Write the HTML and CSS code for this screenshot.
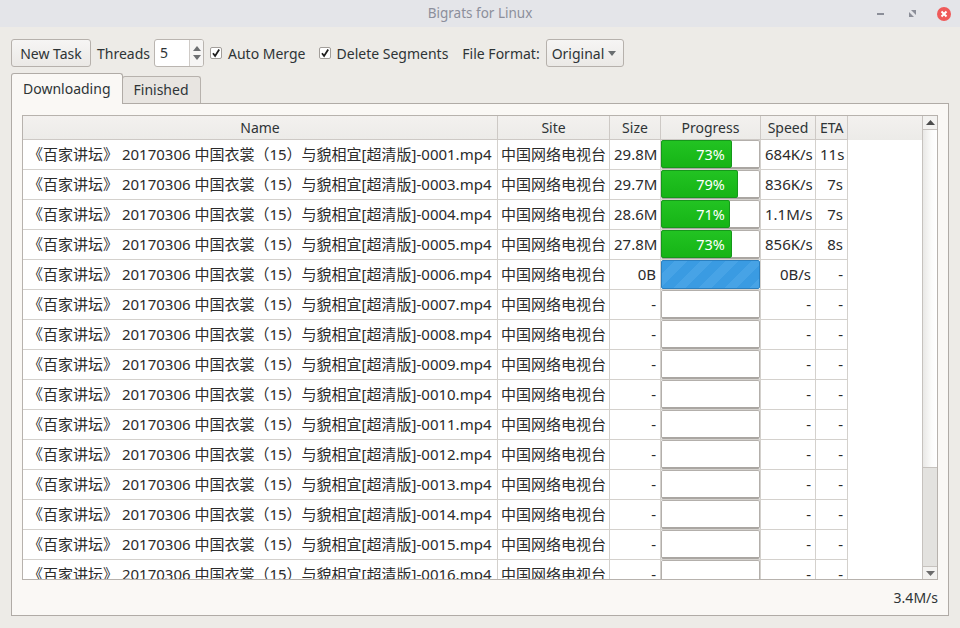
FILE: index.html
```html
<!DOCTYPE html>
<html lang="zh">
<head>
<meta charset="utf-8">
<title>Bigrats for Linux</title>
<link rel="stylesheet" href="styles.css">
</head>
<body>
<div class="window">
  <header class="titlebar">
    <div></div>
    <div class="title">Bigrats for Linux</div>
    <div class="wm">
      <svg class="wm-min" width="7" height="2" viewBox="0 0 7 2"><rect width="7" height="2" fill="#8b8e98"/></svg>
      <svg class="wm-max" width="7" height="7" viewBox="0 0 7 7"><path d="M2 0H7V5Z" fill="#8b8e98"/><path d="M0 2L5 7H0Z" fill="#8b8e98"/></svg>
      <svg class="wm-close" width="14" height="14" viewBox="0 0 14 14"><circle cx="7" cy="7" r="7" fill="#ef5a5a"/><path d="M4.5 4.5L9.5 9.5M9.5 4.5L4.5 9.5" stroke="#fff" stroke-width="2"/></svg>
    </div>
  </header>
  <main class="content">
    <div class="toolbar">
      <button class="btn">New Task</button>
      <span class="label l-threads">Threads</span>
      <div class="spin">
        <span class="spin-val">5</span>
        <div class="spin-arrows">
          <svg width="8" height="5" viewBox="0 0 8 5"><path d="M4 0L8 5H0Z" fill="#6e7072"/></svg>
          <svg width="8" height="5" viewBox="0 0 8 5"><path d="M0 0H8L4 5Z" fill="#6e7072"/></svg>
        </div>
      </div>
      <span class="check c-auto"><span class="box"><svg width="10" height="10" viewBox="0 0 10 10"><path d="M2 5.2L4.1 8L8.2 1.6" fill="none" stroke="#1e1e1e" stroke-width="1.8"/></svg></span>Auto Merge</span>
      <span class="check c-del"><span class="box"><svg width="10" height="10" viewBox="0 0 10 10"><path d="M2 5.2L4.1 8L8.2 1.6" fill="none" stroke="#1e1e1e" stroke-width="1.8"/></svg></span>Delete Segments</span>
      <span class="label l-format">File Format:</span>
      <div class="combo"><span>Original</span><svg width="8" height="5" viewBox="0 0 8 5"><path d="M0 0H8L4 5Z" fill="#6a6e70"/></svg></div>
    </div>
    <div class="tabs">
      <div class="tab active">Downloading</div>
      <div class="tab">Finished</div>
    </div>
    <section class="pane">
      <div class="frame">
        <div class="viewport">
          <div class="row head">
            <div class="c">Name</div><div class="c">Site</div><div class="c">Size</div><div class="c">Progress</div><div class="c">Speed</div><div class="c">ETA</div><div class="fill"></div>
          </div>
          <div class="row"><div class="c name">《百家讲坛》 20170306 中国衣裳（15）与貌相宜[超清版]-0001.mp4</div><div class="c site">中国网络电视台</div><div class="c num">29.8M</div><div class="c prog"><div class="bar"><div class="chunk" style="width:73%"></div><span class="pct">73%</span></div></div><div class="c num">684K/s</div><div class="c num">11s</div><div class="fill"></div></div>
          <div class="row"><div class="c name">《百家讲坛》 20170306 中国衣裳（15）与貌相宜[超清版]-0003.mp4</div><div class="c site">中国网络电视台</div><div class="c num">29.7M</div><div class="c prog"><div class="bar"><div class="chunk" style="width:79%"></div><span class="pct">79%</span></div></div><div class="c num">836K/s</div><div class="c num">7s</div><div class="fill"></div></div>
          <div class="row"><div class="c name">《百家讲坛》 20170306 中国衣裳（15）与貌相宜[超清版]-0004.mp4</div><div class="c site">中国网络电视台</div><div class="c num">28.6M</div><div class="c prog"><div class="bar"><div class="chunk" style="width:71%"></div><span class="pct">71%</span></div></div><div class="c num">1.1M/s</div><div class="c num">7s</div><div class="fill"></div></div>
          <div class="row"><div class="c name">《百家讲坛》 20170306 中国衣裳（15）与貌相宜[超清版]-0005.mp4</div><div class="c site">中国网络电视台</div><div class="c num">27.8M</div><div class="c prog"><div class="bar"><div class="chunk" style="width:73%"></div><span class="pct">73%</span></div></div><div class="c num">856K/s</div><div class="c num">8s</div><div class="fill"></div></div>
          <div class="row"><div class="c name">《百家讲坛》 20170306 中国衣裳（15）与貌相宜[超清版]-0006.mp4</div><div class="c site">中国网络电视台</div><div class="c num">0B</div><div class="c prog"><div class="bar busy"></div></div><div class="c num">0B/s</div><div class="c num">-</div><div class="fill"></div></div>
          <div class="row"><div class="c name">《百家讲坛》 20170306 中国衣裳（15）与貌相宜[超清版]-0007.mp4</div><div class="c site">中国网络电视台</div><div class="c num">-</div><div class="c prog"><div class="bar"></div></div><div class="c num">-</div><div class="c num">-</div><div class="fill"></div></div>
          <div class="row"><div class="c name">《百家讲坛》 20170306 中国衣裳（15）与貌相宜[超清版]-0008.mp4</div><div class="c site">中国网络电视台</div><div class="c num">-</div><div class="c prog"><div class="bar"></div></div><div class="c num">-</div><div class="c num">-</div><div class="fill"></div></div>
          <div class="row"><div class="c name">《百家讲坛》 20170306 中国衣裳（15）与貌相宜[超清版]-0009.mp4</div><div class="c site">中国网络电视台</div><div class="c num">-</div><div class="c prog"><div class="bar"></div></div><div class="c num">-</div><div class="c num">-</div><div class="fill"></div></div>
          <div class="row"><div class="c name">《百家讲坛》 20170306 中国衣裳（15）与貌相宜[超清版]-0010.mp4</div><div class="c site">中国网络电视台</div><div class="c num">-</div><div class="c prog"><div class="bar"></div></div><div class="c num">-</div><div class="c num">-</div><div class="fill"></div></div>
          <div class="row"><div class="c name">《百家讲坛》 20170306 中国衣裳（15）与貌相宜[超清版]-0011.mp4</div><div class="c site">中国网络电视台</div><div class="c num">-</div><div class="c prog"><div class="bar"></div></div><div class="c num">-</div><div class="c num">-</div><div class="fill"></div></div>
          <div class="row"><div class="c name">《百家讲坛》 20170306 中国衣裳（15）与貌相宜[超清版]-0012.mp4</div><div class="c site">中国网络电视台</div><div class="c num">-</div><div class="c prog"><div class="bar"></div></div><div class="c num">-</div><div class="c num">-</div><div class="fill"></div></div>
          <div class="row"><div class="c name">《百家讲坛》 20170306 中国衣裳（15）与貌相宜[超清版]-0013.mp4</div><div class="c site">中国网络电视台</div><div class="c num">-</div><div class="c prog"><div class="bar"></div></div><div class="c num">-</div><div class="c num">-</div><div class="fill"></div></div>
          <div class="row"><div class="c name">《百家讲坛》 20170306 中国衣裳（15）与貌相宜[超清版]-0014.mp4</div><div class="c site">中国网络电视台</div><div class="c num">-</div><div class="c prog"><div class="bar"></div></div><div class="c num">-</div><div class="c num">-</div><div class="fill"></div></div>
          <div class="row"><div class="c name">《百家讲坛》 20170306 中国衣裳（15）与貌相宜[超清版]-0015.mp4</div><div class="c site">中国网络电视台</div><div class="c num">-</div><div class="c prog"><div class="bar"></div></div><div class="c num">-</div><div class="c num">-</div><div class="fill"></div></div>
          <div class="row"><div class="c name">《百家讲坛》 20170306 中国衣裳（15）与貌相宜[超清版]-0016.mp4</div><div class="c site">中国网络电视台</div><div class="c num">-</div><div class="c prog"><div class="bar"></div></div><div class="c num">-</div><div class="c num">-</div><div class="fill"></div></div>
        </div>
        <div class="scrollbar">
          <div class="sb-btn"><svg width="9" height="5" viewBox="0 0 9 5"><path d="M4.5 0L9 5H0Z" fill="#4c4c4c"/></svg></div>
          <div class="sb-thumb"></div>
          <div class="sb-track"></div>
          <div class="sb-btn down"><svg width="9" height="5" viewBox="0 0 9 5"><path d="M0 0H9L4.5 5Z" fill="#6c6c6c"/></svg></div>
        </div>
      </div>
      <div class="status">3.4M/s</div>
    </section>
  </main>
</div>
</body>
</html>
```

FILE: styles.css
```css
* { box-sizing: border-box; }
html, body { margin: 0; padding: 0; }
body {
  width: 960px;
  height: 628px;
  overflow: hidden;
  background: #edebe7;
  font-family: "Noto Sans", "Noto Sans CJK SC", sans-serif;
  font-size: 14px;
  color: #2e3436;
}
.window { width: 960px; height: 628px; display: flex; flex-direction: column; }

.titlebar {
  height: 27px;
  flex: none;
  background: #e4e5e9;
  display: grid;
  grid-template-columns: 1fr auto 1fr;
  align-items: center;
}
.title { font-size: 13.5px; color: #8c8f9b; line-height: 27px; }
.wm { display: flex; align-items: center; justify-content: flex-end; padding-right: 9px; }
.wm svg { display: block; }
.wm-min { margin-right: 25px; }
.wm-max { margin-right: 21px; }

.content { flex: 1; padding: 12px 12px 0 11px; display: flex; flex-direction: column; }

.toolbar { display: flex; align-items: center; height: 28px; }
.btn {
  width: 80px; height: 28px;
  font: inherit; color: #2e3436;
  border: 1px solid #b6b1ac; border-radius: 3px;
  background: linear-gradient(#f6f5f4, #ebe9e6);
  padding: 0;
}
.label { white-space: nowrap; }
.l-threads { margin-left: 6px; }
.spin {
  margin-left: 4px; width: 50px; height: 28px;
  background: #fff; border: 1px solid #bab5b0; border-radius: 3px;
  display: flex; align-items: stretch;
}
.spin-val { flex: 1; padding-left: 5px; line-height: 26px; }
.spin-arrows {
  width: 14px; border-left: 1px solid #cfcbc7;
  display: flex; flex-direction: column; justify-content: center; align-items: center; gap: 4px;
  background: #f6f5f4;
  border-radius: 0 2px 2px 0;
}
.spin-arrows svg { display: block; }
.check { display: flex; align-items: center; white-space: nowrap; }
.c-auto { margin-left: 6px; }
.c-del { margin-left: 13px; }
.box {
  width: 12px; height: 12px; margin-right: 6px;
  border: 1px solid #a29e9a; border-radius: 2px; background: #fff;
  display: flex; align-items: center; justify-content: center;
}
.box svg { display: block; }
.l-format { margin-left: 14px; }
.combo {
  margin-left: 6px; width: 78px; height: 28px;
  border: 1px solid #b6b1ac; border-radius: 3px;
  background: linear-gradient(#f6f5f4, #ebe9e6);
  display: flex; align-items: center; justify-content: space-between;
  padding: 0 7px 0 5px;
}
.combo svg { display: block; }

.tabs { display: flex; align-items: flex-end; height: 29px; margin-top: 7px; }
.tab {
  height: 27px; padding: 0 11px; line-height: 26px;
  background: #e8e5e1; border: 1px solid #b7b2ad; border-bottom: none;
  border-radius: 3px 3px 0 0;
}
.tab.active {
  height: 31px; margin-bottom: -1px; line-height: 30px;
  background: #faf8f5; position: relative; z-index: 1;
  border-color: #b0aba6;
}
.tab + .tab { margin-left: -1px; }

.pane {
  width: 938px; height: 513px;
  background: #faf8f5; border: 1px solid #b0aba6;
  padding: 11px 10px 0 10px;
  display: flex; flex-direction: column;
}
.frame {
  width: 916px; height: 465px;
  border: 1px solid #b7b2ad;
  display: flex; background: #fff;
}
.viewport { flex: 1; overflow: hidden; font-size: 15px; color: #2b2b2b; }
.row {
  display: grid;
  grid-template-columns: 475px 112px 51px 100px 55px 32px 1fr;
  height: 30px;
}
.row .c {
  border-right: 1px solid #d4d1cd; border-bottom: 1px solid #d4d1cd;
  padding: 0 4px; line-height: 29px; white-space: nowrap; overflow: hidden;
}
.row .name { padding-left: 5px; }
.row .site { padding-left: 3px; }
.row.head { height: 24px; background: linear-gradient(#f3f1ef, #ecebe8); font-size: 14px; }
.row.head .c { text-align: center; line-height: 23px; border-color: #cdc9c5; color: #2e3436; }
.row .num { text-align: right; }
.row .prog { padding: 0; }
.bar {
  height: 29px; border: 1px solid #b3afab; border-bottom: 2px solid #aaa6a2; border-radius: 2px; background: #fff;
  display: flex; position: relative;
}
.chunk {
  height: calc(100% + 2px); margin: -1px 0 0 -1px;
  background: linear-gradient(#22c322, #16b416);
  border: 1px solid #15981a; border-radius: 2px;
}
.pct {
  position: absolute; left: 0; right: 0; top: 0; bottom: 0;
  text-align: center; line-height: 27px; color: #fff; font-size: 14.5px;
}
.bar.busy {
  background: repeating-linear-gradient(135deg, #3a9be2 0 9px, #47a3e6 9px 18px);
  border: 1px solid #2b7fbf;
}

.scrollbar {
  width: 15px; flex: none; border-left: 1px solid #c6c2be;
  display: flex; flex-direction: column; background: #e3e2df;
}
.sb-btn {
  height: 14px; flex: none; display: flex; align-items: center; justify-content: center;
  background: #f3f2f0; border-bottom: 1px solid #c6c2be;
}
.sb-btn.down { border-bottom: none; border-top: 1px solid #c6c2be; height: 13px; }
.sb-btn svg { display: block; }
.sb-thumb {
  height: 338px; flex: none;
  background: linear-gradient(90deg, #e9e8e6, #fbfbfa 60%, #ffffff);
  border-bottom: 1px solid #c6c2be;
}
.sb-track { flex: 1; }

.status { height: 35px; display: flex; align-items: center; justify-content: flex-end; padding-right: 0; }
```
